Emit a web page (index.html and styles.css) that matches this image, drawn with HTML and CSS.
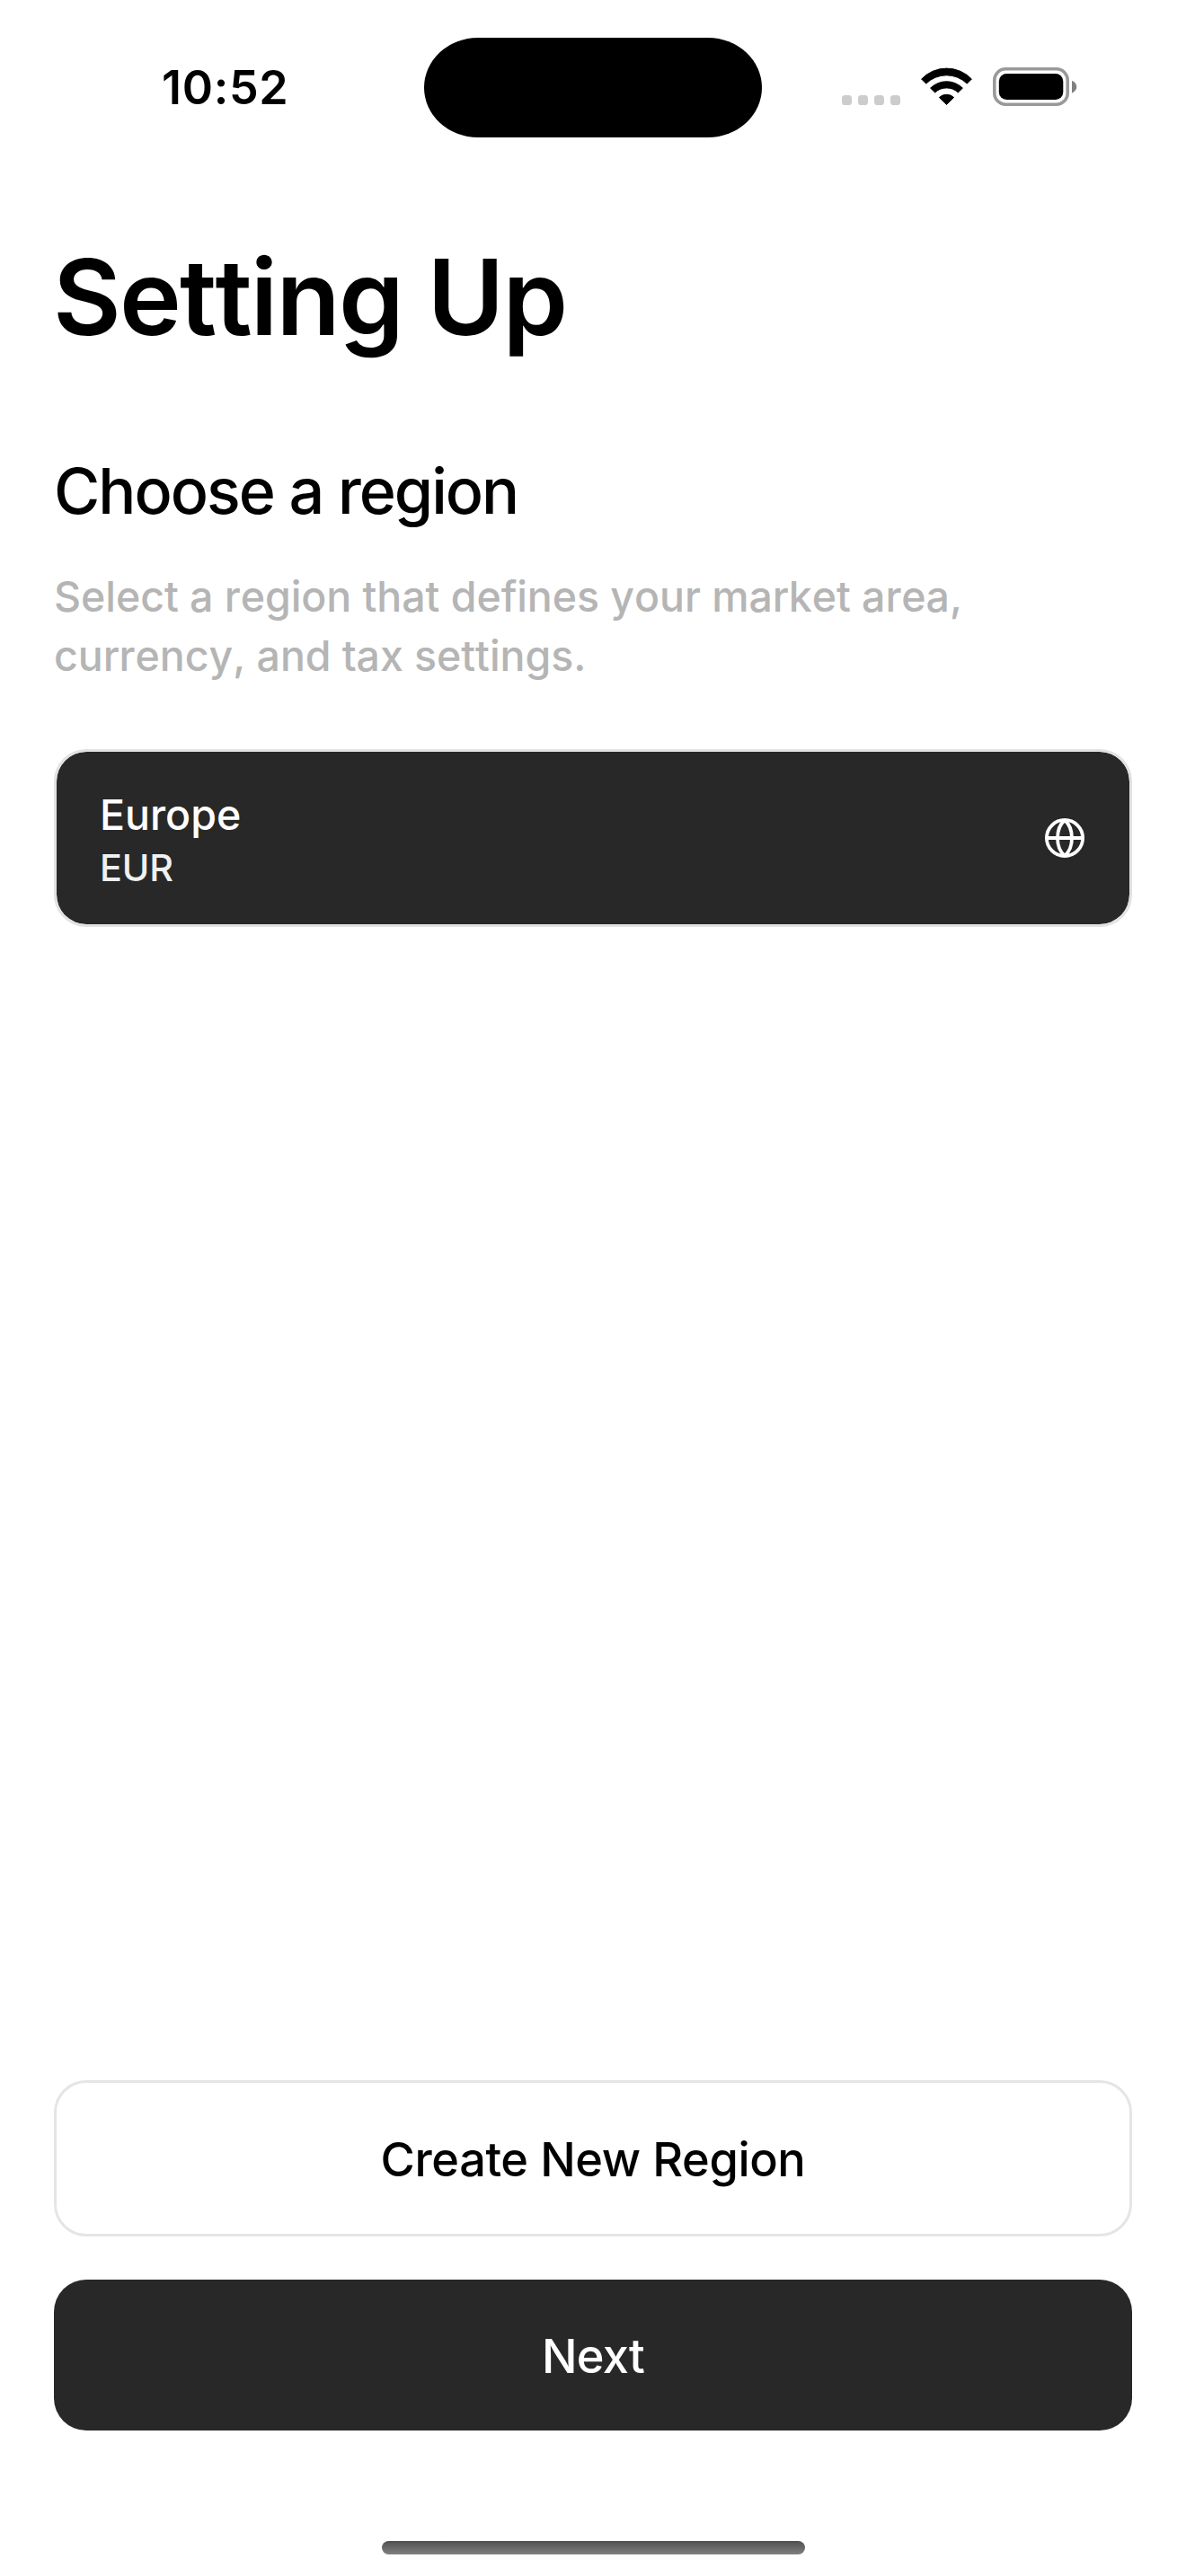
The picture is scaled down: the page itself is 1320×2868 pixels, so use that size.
FILE: index.html
```html
<!DOCTYPE html>
<html lang="en">
<head>
<meta charset="utf-8">
<title>Setting Up</title>
<link rel="stylesheet" href="styles.css">
</head>
<body>
<div class="screen">
  <header class="status-bar">
    <span class="clock">10:52</span>
    <div class="island"></div>
    <div class="indicators">
      <svg class="cellular" width="65" height="11" viewBox="0 0 65 11" aria-hidden="true">
        <rect x="0" width="11" height="11" rx="3.6"/>
        <rect x="18" width="11" height="11" rx="3.6"/>
        <rect x="36" width="11" height="11" rx="3.6"/>
        <rect x="54" width="11" height="11" rx="3.6"/>
      </svg>
      <svg class="wifi" width="57" height="42" viewBox="0 0 57 42" aria-hidden="true">
        <path d="M.6 13A38.7 38.7 0 0 1 56.4 13L51.3 18.1A32.6 32.6 0 0 0 5.7 18.1Z"/>
        <path d="M10.6 23.1A25.4 25.4 0 0 1 46.4 23.1L41.3 28A18.6 18.6 0 0 0 15.7 28Z"/>
        <path d="M20.4 33.5A11.8 11.8 0 0 1 36.6 33.5L28.5 41.5Z"/>
      </svg>
      <svg class="battery" width="94" height="43" viewBox="0 0 94 43" aria-hidden="true">
        <rect class="battery-shell" x="1.8" y="1.8" width="81.4" height="39.4" rx="12.5"/>
        <rect class="battery-level" x="6.8" y="7" width="71.5" height="29" rx="8.5"/>
        <path class="battery-cap" d="M88 14.7C91.200 16 93.300 18.600 93.300 21.600C93.300 24.600 91.200 27.400 88 28.700Z"/>
      </svg>
    </div>
  </header>

  <main class="content">
    <h1 class="title">Setting Up</h1>
    <h2 class="subtitle">Choose a region</h2>
    <p class="description">Select a region that defines your market area,<br>currency, and tax settings.</p>

    <div class="region-card">
      <div class="region-text">
        <div class="region-name">Europe</div>
        <div class="region-currency">EUR</div>
      </div>
      <svg class="globe" width="44" height="44" viewBox="0 0 44 44" aria-hidden="true">
        <circle cx="22" cy="22" r="20.1"/>
        <path d="M2 22H42M22 2C17 6.500 14 14 14 22S17 37.500 22 42M22 2C27 6.500 30 14 30 22S27 37.500 22 42"/>
      </svg>
    </div>
  </main>

  <footer class="actions">
    <button class="button button-outline">Create New Region</button>
    <button class="button button-primary">Next</button>
  </footer>
  <div class="home-indicator"></div>
</div>
</body>
</html>
```
FILE: styles.css
```css
* {
  box-sizing: border-box;
}

body {
  margin: 0;
  background: #fff;
  color: #000;
  font-family: Inter, "Liberation Sans", sans-serif;
}

.screen {
  display: flex;
  flex-direction: column;
  width: 1320px;
  height: 2868px;
}

.status-bar {
  display: flex;
  align-items: center;
  height: 194px;
  padding-left: 180px;
}

.clock {
  width: 292px;
  padding-top: 2px;
  font-size: 52px;
  line-height: 62px;
  font-weight: 600;
  letter-spacing: 0.7px;
}

.island {
  width: 376px;
  height: 111px;
  border-radius: 60px / 55.5px;
  background: #000;
}

.indicators {
  display: flex;
  align-items: flex-end;
  gap: 23px;
  height: 43px;
  margin: 0 0 1px 89px;
}

.cellular {
  margin-bottom: 1px;
  fill: #ccc;
}

.wifi {
  margin-bottom: 1px;
  stroke: #000;
  stroke-width: 1;
  stroke-linejoin: round;
}

.battery-shell {
  fill: none;
  stroke: #999;
  stroke-width: 3.6;
}

.battery-cap {
  fill: #808080;
}

.content {
  flex: 1;
  padding: 64px 60px 0;
}

.title {
  margin: 0 0 100px -1px;
  font-size: 116.5px;
  line-height: 145px;
  font-weight: 600;
  font-kerning: none;
  letter-spacing: -1.79px;
}

.subtitle {
  margin: 0 0 41px;
  font-size: 70px;
  line-height: 87px;
  font-weight: 500;
  letter-spacing: -2px;
}

.description {
  margin: 0 0 71px;
  color: #b5b5b5;
  font-size: 46.5px;
  line-height: 66px;
  font-weight: 500;
  font-kerning: none;
  letter-spacing: -0.06px;
}

.region-card {
  display: flex;
  align-items: center;
  justify-content: space-between;
  height: 198px;
  padding: 0 50px 0 48px;
  border: 3px solid #e2e2e2;
  border-radius: 36px;
  background: #282828;
  background-clip: padding-box;
  color: #fff;
}

.region-text {
  display: flex;
  flex-direction: column;
  gap: 5px;
  padding-top: 3px;
}

.region-name {
  font-size: 46.5px;
  line-height: 58px;
  font-weight: 500;
}

.region-currency {
  color: #f0f0f0;
  font-size: 41.3px;
  line-height: 50px;
  font-weight: 500;
  letter-spacing: -0.15px;
}

.globe {
  fill: none;
  stroke: #fff;
  stroke-width: 3.8;
}

.actions {
  display: flex;
  flex-direction: column;
  gap: 48px;
  padding: 0 60px;
}

.button {
  height: 168px;
  padding: 2px 0 0;
  border: 0;
  border-radius: 36px;
  font-family: inherit;
  font-size: 52.3px;
  font-weight: 500;
}

.button-outline {
  height: 174px;
  border: 3px solid #e5e5e5;
  background: #fff;
  color: #000;
  letter-spacing: -0.4px;
}

.button-primary {
  background: #282828;
  color: #fff;
  letter-spacing: -0.75px;
}

.home-indicator {
  width: 471px;
  height: 15px;
  margin: 123px auto 24px;
  border-radius: 7.5px;
  background: linear-gradient(#4f4f4f, #808080);
}
```
